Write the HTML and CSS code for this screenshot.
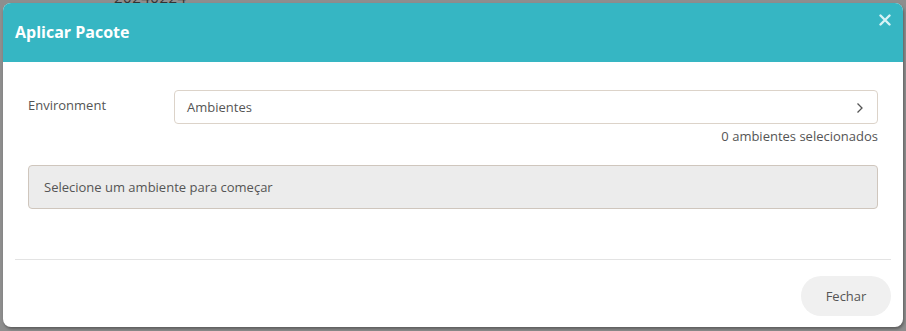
FILE: index.html
```html
<!DOCTYPE html>
<html lang="pt">
<head>
<meta charset="utf-8">
<link rel="stylesheet" href="styles.css">
</head>
<body>
<div class="backdrop-text">20240224</div>
<div class="overlay">
  <div class="modal">
    <div class="modal-header">
      <h2 class="modal-title">Aplicar Pacote</h2>
      <button class="close-btn" aria-label="Fechar">
        <svg width="12" height="12" viewBox="0 0 12 12"><path d="M1.5 1.5 L10.5 10.5 M10.5 1.5 L1.5 10.5" stroke="#d8f3f6" stroke-width="2.4" stroke-linecap="round"/></svg>
      </button>
    </div>
    <div class="modal-body">
      <div class="field-row">
        <label class="field-label">Environment</label>
        <div class="field-control">
          <div class="select-box">
            <span>Ambientes</span>
            <svg class="chev" width="8" height="12" viewBox="0 0 8 12"><path d="M1.5 1.5 L6 6 L1.5 10.5" fill="none" stroke="#555" stroke-width="1.3"/></svg>
          </div>
          <div class="hint">0 ambientes selecionados</div>
        </div>
      </div>
      <div class="empty-box">Selecione um ambiente para começar</div>
    </div>
    <div class="modal-footer">
      <button class="btn-close">Fechar</button>
    </div>
  </div>
</div>
</body>
</html>
```
FILE: styles.css
```css
* { box-sizing: border-box; }
html, body { margin: 0; padding: 0; }
body {
  width: 906px;
  height: 331px;
  background: #8e8e8e;
  font-family: "Open Sans", "Noto Sans", sans-serif;
  overflow: hidden;
  position: relative;
}
.backdrop-text {
  position: absolute;
  left: 114px;
  top: -13px;
  font-size: 15px;
  color: #333;
  letter-spacing: 0.5px;
}
.overlay {
  position: relative;
  padding: 3px;
}
.modal {
  width: 900px;
  height: 324px;
  background: #fff;
  border-radius: 8px;
  overflow: hidden;
  display: flex;
  flex-direction: column;
  box-shadow: 1px 2px 3px rgba(0,0,0,0.35);
}
.modal-header {
  height: 59px;
  background: #36b6c3;
  display: flex;
  align-items: flex-start;
  justify-content: space-between;
  padding: 0 12px 0 12px;
}
.modal-title {
  margin: 18px 0 0 0;
  color: #fff;
  font-size: 16px;
  font-weight: 700;
  line-height: 22px;
}
.close-btn {
  background: none;
  border: none;
  padding: 0;
  margin: 11px 0 0 0;
  width: 12px;
  height: 12px;
  display: flex;
}
.modal-body {
  padding: 28px 25px 0 25px;
  height: 197px;
}
.field-row {
  display: flex;
  align-items: flex-start;
}
.field-label {
  width: 146px;
  font-size: 13px;
  color: #555;
  line-height: 18px;
  padding-top: 6px;
}
.field-control {
  flex: 1;
}
.select-box {
  height: 34px;
  border: 1px solid #dcd3c9;
  border-radius: 4px;
  display: flex;
  align-items: center;
  justify-content: space-between;
  padding: 0 13px 0 12px;
  font-size: 13px;
  color: #555;
}
.chev { margin-top: 1px; }
.hint {
  text-align: right;
  font-size: 13px;
  color: #555;
  line-height: 18px;
  margin-top: 3px;
}
.empty-box {
  margin-top: 20px;
  height: 44px;
  background: #ececec;
  border: 1px solid #cfc6bd;
  border-radius: 4px;
  font-size: 13px;
  color: #555;
  display: flex;
  align-items: center;
  padding: 0 15px;
}
.modal-footer {
  margin: 0 12px;
  border-top: 1px solid #e3e3e3;
  display: flex;
  justify-content: flex-end;
  padding-top: 16px;
}
.btn-close {
  width: 90px;
  height: 40px;
  border-radius: 20px;
  border: none;
  background: #f0f0f0;
  font-family: "Open Sans", "Noto Sans", sans-serif;
  font-size: 13px;
  color: #555;
}
```
